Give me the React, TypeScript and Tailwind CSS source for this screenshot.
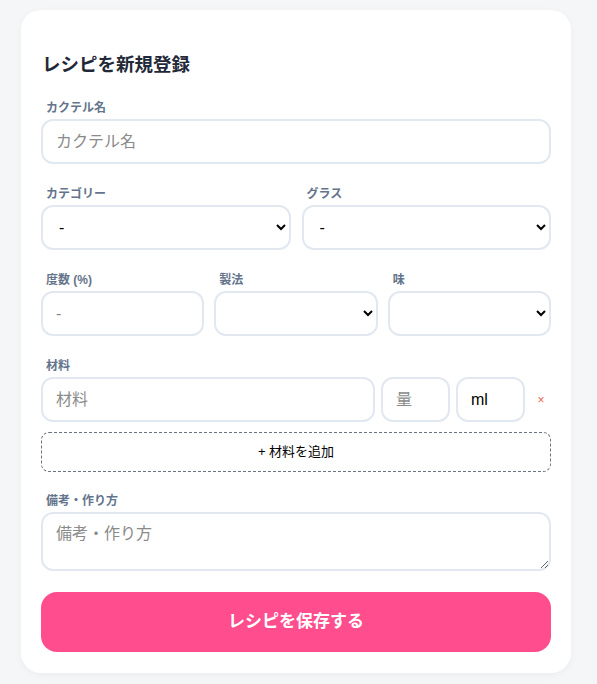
import React from "react";

const font = { fontFamily: '"Liberation Sans", "Noto Sans CJK JP", sans-serif' };

function Label({ children }: { children: React.ReactNode }) {
  return (
    <div className="pl-[5px] h-[16px] leading-[16px] text-[12px] font-bold text-[#64748b] mb-[3px]">
      {children}
    </div>
  );
}

const ctrl =
  "w-full h-[45px] rounded-[12px] border-2 border-[#e2e8f0] bg-white text-[16px] text-black outline-none placeholder:text-[#8a8a8a]";

export default function App() {
  return (
    <div style={font} className="min-h-[684px] bg-[#f5f6f8] pt-[10px] pb-[12px]">
      <div className="ml-[21px] w-[550px] rounded-[20px] bg-white shadow-[0_2px_8px_rgba(0,0,0,0.04)] px-[20px] pt-[41px] pb-[21px]">
        <h2 className="h-[27px] leading-[27px] text-[18.5px] font-bold text-[#1f2937] pl-[1px] mb-[22px]">
          レシピを新規登録
        </h2>

        <div className="mb-[22px]">
          <Label>カクテル名</Label>
          <input className={`${ctrl} px-[13px]`} placeholder="カクテル名" />
        </div>

        <div className="grid grid-cols-2 gap-[11px] mb-[22px]">
          <div>
            <Label>カテゴリー</Label>
            <select className={`${ctrl} pl-[12px] pr-[15px]`} defaultValue="-">
              <option>-</option>
            </select>
          </div>
          <div>
            <Label>グラス</Label>
            <select className={`${ctrl} pl-[12px] pr-[15px]`} defaultValue="-">
              <option>-</option>
            </select>
          </div>
        </div>

        <div className="grid grid-cols-3 gap-[10px] mb-[22px]">
          <div>
            <Label>度数 (%)</Label>
            <input className={`${ctrl} px-[13px]`} placeholder="-" />
          </div>
          <div>
            <Label>製法</Label>
            <select className={`${ctrl} pl-[12px] pr-[15px]`} defaultValue="">
              <option value=""></option>
            </select>
          </div>
          <div>
            <Label>味</Label>
            <select className={`${ctrl} pl-[12px] pr-[15px]`} defaultValue="">
              <option value=""></option>
            </select>
          </div>
        </div>

        <div className="mb-[21px]">
          <Label>材料</Label>
          <div className="flex items-center gap-[6px]">
            <input className={`${ctrl} flex-1 px-[13px]`} placeholder="材料" />
            <input className={`${ctrl} !w-[69px] shrink-0 px-[13px]`} placeholder="量" />
            <input className={`${ctrl} !w-[69px] shrink-0 px-[13px]`} defaultValue="ml" />
            <button className="w-[20px] shrink-0 text-[12px] leading-none text-[#f0624f] text-center">
              ×
            </button>
          </div>
          <button className="mt-[10px] w-full h-[40px] rounded-[8px] border border-dashed border-[#6b7280] bg-white text-[13px] text-black">
            + 材料を追加
          </button>
        </div>

        <div className="mb-[21px]">
          <Label>備考・作り方</Label>
          <textarea
            className="block w-full h-[59px] rounded-[12px] border-2 border-[#e2e8f0] bg-white text-[16px] text-black outline-none px-[13px] py-[8px] placeholder:text-[#8a8a8a]"
            placeholder="備考・作り方"
          />
        </div>

        <button className="w-full h-[60px] rounded-[16px] bg-[#ff4d8d] text-white text-[17px] font-bold">
          レシピを保存する
        </button>
      </div>
    </div>
  );
}
